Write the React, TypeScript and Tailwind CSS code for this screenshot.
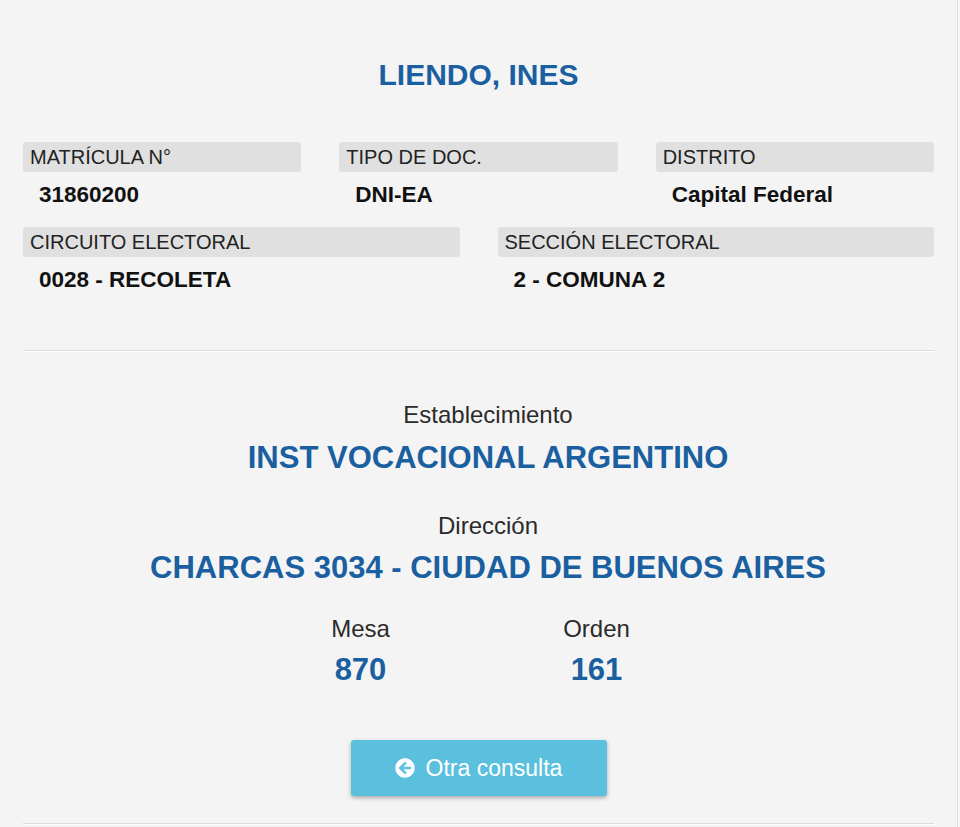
import { FaArrowCircleLeft } from "react-icons/fa";

const font = { fontFamily: '"Liberation Sans", Arial, sans-serif' };

function Field({ label, value }: { label: string; value: string }) {
    return (
        <div className="flex flex-col">
            <div className="h-[30px] rounded-[3px] bg-[#e0e0e0] px-[7px] text-[20px] leading-[31px] text-[#222]">
                {label}
            </div>
            <div className="h-[55px] pt-[8px] px-[16px] text-[22.5px] leading-[30px] font-bold text-[#111]">
                {value}
            </div>
        </div>
    );
}

export default function App() {
    return (
        <div className="min-h-screen w-full bg-[#f6f6f6]" style={font}>
            <div className="w-[958px] min-h-[827px] bg-[#f4f4f4] border-r border-[#dedede] px-[23px] pt-[57px]">
                {/* title */}
                <h1 className="text-center text-[30px] leading-[36px] font-bold text-[#1a5fa0]">LIENDO, INES</h1>

                {/* datos */}
                <div className="mt-[49px] grid grid-cols-3 gap-x-[38px]">
                    <Field label="MATRÍCULA N°" value="31860200" />
                    <Field label="TIPO DE DOC." value="DNI-EA" />
                    <Field label="DISTRITO" value="Capital Federal" />
                </div>
                <div className="grid grid-cols-2 gap-x-[38px]">
                    <Field label="CIRCUITO ELECTORAL" value="0028 - RECOLETA" />
                    <Field label="SECCIÓN ELECTORAL" value="2 - COMUNA 2" />
                </div>

                <div className="mt-[38px] border-t border-[#dcdcdc] border-b border-b-white" />

                {/* establecimiento */}
                <div className="flex flex-col items-center text-center">
                    <div className="flex flex-col items-center pl-[19px]">
                        <p className="mt-[48px] text-[24px] leading-[30px] text-[#2b2b2b]">Establecimiento</p>
                        <p className="mt-[10px] text-[31px] leading-[36px] font-bold text-[#1a5fa0]">INST VOCACIONAL ARGENTINO</p>
                        <p className="mt-[35px] text-[24px] leading-[30px] text-[#2b2b2b]">Dirección</p>
                        <p className="mt-[9px] text-[31px] leading-[36px] font-bold text-[#1a5fa0]">CHARCAS 3034 - CIUDAD DE BUENOS AIRES</p>
                    </div>

                    <div className="mt-[28px] grid grid-cols-[236px_236px]">
                        <div className="flex flex-col items-center">
                            <p className="text-[24px] leading-[30px] text-[#2b2b2b]">Mesa</p>
                            <p className="mt-[8px] text-[31px] leading-[36px] font-bold text-[#1a5fa0]">870</p>
                        </div>
                        <div className="flex flex-col items-center">
                            <p className="text-[24px] leading-[30px] text-[#2b2b2b]">Orden</p>
                            <p className="mt-[8px] text-[31px] leading-[36px] font-bold text-[#1a5fa0]">161</p>
                        </div>
                    </div>

                    <button className="mt-[52px] h-[56px] w-[256px] rounded-[3px] bg-[#5bc0de] text-white text-[23px] flex items-center justify-center gap-[11px] shadow-[0_2px_4px_rgba(0,0,0,0.3)]">
                        <FaArrowCircleLeft size={20} />
                        <span>Otra consulta</span>
                    </button>
                </div>

                <div className="mt-[27px] border-t border-[#dcdcdc] border-b border-b-white" />
            </div>
        </div>
    );
}
